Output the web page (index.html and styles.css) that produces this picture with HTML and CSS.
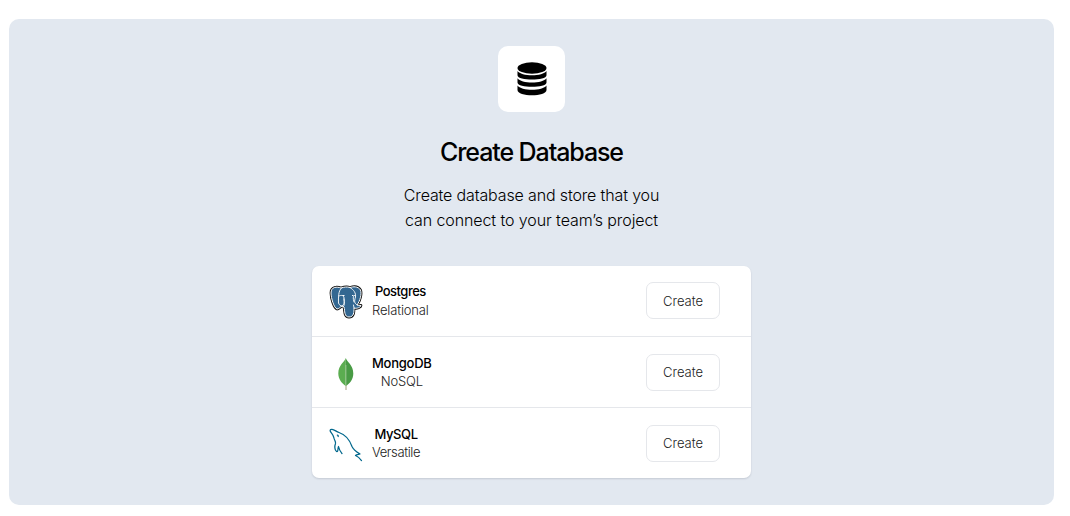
FILE: index.html
```
<!DOCTYPE html>
<html lang="en">
<head>
<meta charset="utf-8">
<title>Create Database</title>
<link rel="stylesheet" href="styles.css">
</head>
<body>
<main class="panel">
  <div class="badge">
    <svg width="30" height="34" viewBox="0 0 30 34">
      <ellipse cx="15" cy="6" rx="14.500" ry="5.700"/>
      <path d="M.5 9C4 14.700 26 14.700 29.500 9V13.200C29.500 19 .5 19 .5 13.200Z"/>
      <path d="M.5 16.200C4 21.900 26 21.900 29.500 16.200V20.400C29.500 26.200 .5 26.200 .5 20.400Z"/>
      <path d="M.5 23.400C4 29.100 26 29.100 29.500 23.400V28C29.500 35 .5 35 .5 28Z"/>
    </svg>
  </div>
  <h1 class="title">Create Database</h1>
  <p class="lead">Create database and store that you<br><span class="lead-second">can connect to your team’s project</span></p>
  <ul class="list">
    <li class="row">
      <svg class="logo" width="34" height="34" viewBox="0 0 34 34">
        <path fill="#336791" stroke="#111" stroke-width="2.800" stroke-linejoin="round" d="M12 3C8 1.500 2 1.500 2 8C2 13 5 23 8 24C10 24 11 22 13 21L15 22C16 26 15 32 20 32C25 32 25 27 25 23C28 24 32 22 32 20.500L28 20C31 16 33 9 31.500 5C29 1 24 1.500 21 2.500C18 1.500 15 2 12 3Z"/>
        <path fill="#336791" stroke="#fff" stroke-width="1" stroke-linejoin="round" d="M12 3C8 1.500 2 1.500 2 8C2 13 5 23 8 24C10 24 11 22 13 21L15 22C16 26 15 32 20 32C25 32 25 27 25 23C28 24 32 22 32 20.500L28 20C31 16 33 9 31.500 5C29 1 24 1.500 21 2.500C18 1.500 15 2 12 3Z"/>
        <path fill="none" stroke="#fff" stroke-width=".9" stroke-linecap="round" d="M12.500 3C9 6 9.500 13 9.500 18C10 20 12 21 13 21C16 19 15 16 15 13C15 10 12 10 10 11M21 2.500C25 5 27 8 26.500 12C25 17 25.500 18 28 20M26.500 10.500C23.500 9.500 24 14 25 17M15 14C15.500 18 16 20 14 22M25 23L24.500 20"/>
        <path fill="#fff" d="M13.500 10h2v1h-2zM23 10h1.500v1h-1.500z"/>
      </svg>
      <div class="label"><strong class="name">Postgres</strong><span class="kind">Relational</span></div>
      <button class="create" type="button">Create</button>
    </li>
    <li class="row">
      <svg class="logo" width="34" height="34" viewBox="0 0 34 34">
        <path d="M17 27V33" stroke="#b8b49b" stroke-width="1.300"/>
        <path fill="#5bad50" d="M16.800 1C15.500 5 9.300 8 9.300 16.500C9.300 22 13 26.500 16.800 29Z"/>
        <path fill="#499b45" d="M16.800 1C18 5 24.300 8 24.300 16.500C24.300 22 21 26.500 16.800 29Z"/>
        <path d="M16.900 8V29" stroke="#a7ce9d" stroke-width=".8"/>
      </svg>
      <div class="label"><strong class="name mongo">MongoDB</strong><span class="kind">NoSQL</span></div>
      <button class="create" type="button">Create</button>
    </li>
    <li class="row">
      <svg class="logo" width="34" height="34" viewBox="0 0 34 34" fill="none" stroke="#00678c" stroke-width="1.250" stroke-linecap="round" stroke-linejoin="round">
        <path d="M32.500 32.500C31 30.500 29 28.500 26.500 27.500C27.500 26.500 29.500 26.500 31 26C27 23.500 24.500 22 23 18.500C20.500 11.500 16 6.500 10 4.500C7 3.500 5.500 1.600 3 1.400C.8 1.300 .7 2.500 1.800 4.200C3 6 4.200 7 4.800 9.500C5.200 12 7 13.500 6.500 15.500C5.500 18 5.500 22 7.500 23.500C9.500 24 8.500 20.500 9.500 18.500C10.200 22 11.500 23.500 13 25.500"/>
        <path d="M8.300 7Q9.300 7 9.200 8.500"/>
      </svg>
      <div class="label"><strong class="name mysql">MySQL</strong><span class="kind versatile">Versatile</span></div>
      <button class="create" type="button">Create</button>
    </li>
  </ul>
</main>
</body>
</html>
```
FILE: styles.css
```
* { box-sizing: border-box; }
body {
  margin: 0;
  padding: 19px 16px 11px 9px;
  background: #fff;
  color: #000;
  font-family: Inter, "Liberation Sans", sans-serif;
}
.panel {
  height: 486px;
  padding-top: 27px;
  border-radius: 10px;
  background: #e2e8f0;
  display: flex;
  flex-direction: column;
  align-items: center;
}
.badge {
  width: 67px;
  height: 66px;
  border-radius: 10px;
  background: #fff;
  display: flex;
  align-items: center;
  justify-content: center;
}
.title {
  margin: 24px 0 0;
  font-size: 25px;
  line-height: 32px;
  font-weight: 500;
  letter-spacing: -1.1px;
}
.lead {
  margin: 15px 0 0;
  font-size: 16px;
  line-height: 25px;
  font-weight: 300;
  text-align: center;
  letter-spacing: -0.14px;
}
.lead-second { letter-spacing: -0.09px; }
.list {
  width: 439px;
  margin: 33px 0 0;
  padding: 0;
  list-style: none;
  border-radius: 7px;
  background: #fff;
  box-shadow: 0 1px 2px rgba(15, 23, 42, .14);
}
.row {
  height: 71px;
  padding: 0 31px 0 17px;
  display: flex;
  align-items: center;
  border-bottom: 1px solid #e5e7eb;
}
.row:first-child { padding-bottom: 1px; }
.row:last-child { height: 70px; border-bottom: 0; }
.logo { margin-top: 3px; }
.label {
  margin-left: 9px;
  display: flex;
  flex-direction: column;
  align-items: center;
  font-size: 13px;
  line-height: 18px;
}
.row:first-child .label { line-height: 18.5px; }
.name { font-weight: 500; letter-spacing: -0.5px; }
.mongo { letter-spacing: -0.25px; }
.mysql { letter-spacing: -0.4px; }
.kind { font-weight: 300; letter-spacing: -0.15px; color: #222; }
.versatile { letter-spacing: -0.4px; }
.create {
  width: 74px;
  height: 37px;
  margin-left: auto;
  padding: 0;
  border: 1px solid #e5e7eb;
  border-radius: 7px;
  background: #fff;
  color: #222;
  font: 300 13px Inter, "Liberation Sans", sans-serif;
}
```
